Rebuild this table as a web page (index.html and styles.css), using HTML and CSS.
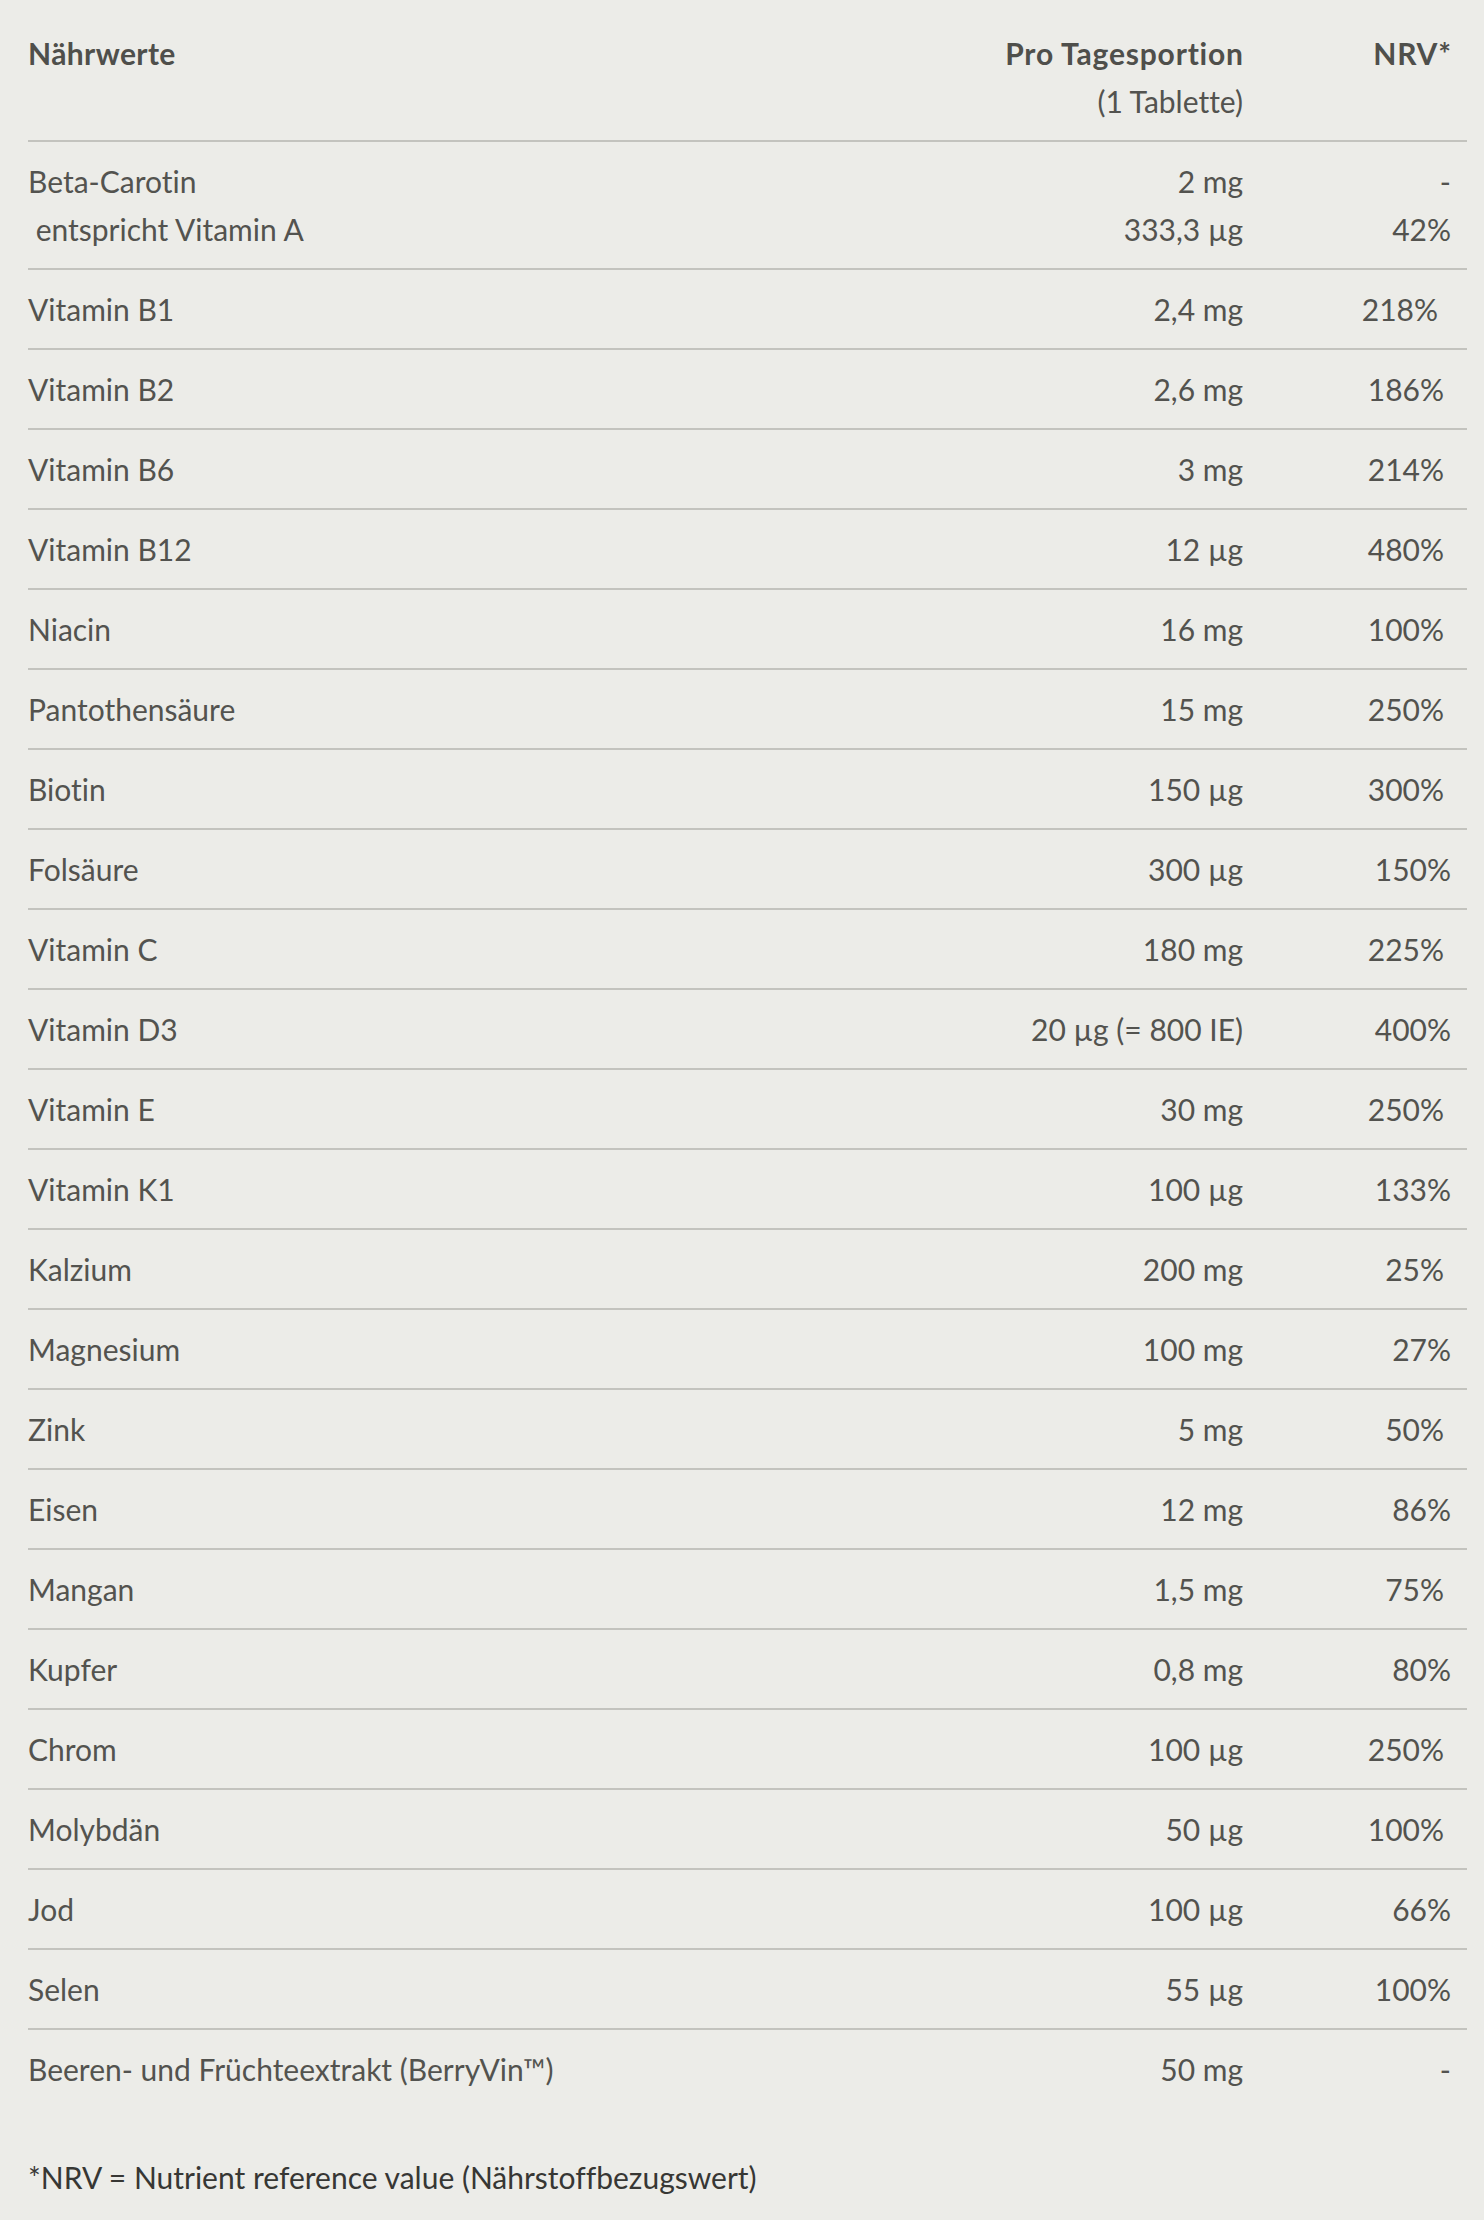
FILE: index.html
```html
<!DOCTYPE html>
<html lang="de">
<head>
<meta charset="utf-8">
<title>Nährwerte</title>
<link rel="stylesheet" href="styles.css">
</head>
<body>
<main class="page">
  <table class="nt">
    <colgroup>
      <col class="c-name">
      <col class="c-amount">
      <col class="c-nrv">
    </colgroup>
    <thead>
      <tr>
        <th class="name">Nährwerte</th>
        <th class="amount"><span class="hd">Pro Tagesportion</span><br><span class="sub">(1 Tablette)</span></th>
        <th class="nrv"><span class="hd">NRV*</span></th>
      </tr>
    </thead>
    <tbody>
      <tr>
        <td class="name">Beta-Carotin<br>&nbsp;entspricht Vitamin A</td>
        <td class="amount">2 mg<br>333,3 µg</td>
        <td class="nrv">-<br>42%</td>
      </tr>
      <tr><td class="name">Vitamin B1</td><td class="amount">2,4 mg</td><td class="nrv s2">218%</td></tr>
      <tr><td class="name">Vitamin B2</td><td class="amount">2,6 mg</td><td class="nrv s1">186%</td></tr>
      <tr><td class="name">Vitamin B6</td><td class="amount">3 mg</td><td class="nrv s1">214%</td></tr>
      <tr><td class="name">Vitamin B12</td><td class="amount">12 µg</td><td class="nrv s1">480%</td></tr>
      <tr><td class="name">Niacin</td><td class="amount">16 mg</td><td class="nrv s1">100%</td></tr>
      <tr><td class="name">Pantothensäure</td><td class="amount">15 mg</td><td class="nrv s1">250%</td></tr>
      <tr><td class="name">Biotin</td><td class="amount">150 µg</td><td class="nrv s1">300%</td></tr>
      <tr><td class="name">Folsäure</td><td class="amount">300 µg</td><td class="nrv">150%</td></tr>
      <tr><td class="name">Vitamin C</td><td class="amount">180 mg</td><td class="nrv s1">225%</td></tr>
      <tr><td class="name">Vitamin D3</td><td class="amount">20 µg (= 800 IE)</td><td class="nrv">400%</td></tr>
      <tr><td class="name">Vitamin E</td><td class="amount">30 mg</td><td class="nrv s1">250%</td></tr>
      <tr><td class="name">Vitamin K1</td><td class="amount">100 µg</td><td class="nrv">133%</td></tr>
      <tr><td class="name">Kalzium</td><td class="amount">200 mg</td><td class="nrv s1">25%</td></tr>
      <tr><td class="name">Magnesium</td><td class="amount">100 mg</td><td class="nrv">27%</td></tr>
      <tr><td class="name">Zink</td><td class="amount">5 mg</td><td class="nrv s1">50%</td></tr>
      <tr><td class="name">Eisen</td><td class="amount">12 mg</td><td class="nrv">86%</td></tr>
      <tr><td class="name">Mangan</td><td class="amount">1,5 mg</td><td class="nrv s1">75%</td></tr>
      <tr><td class="name">Kupfer</td><td class="amount">0,8 mg</td><td class="nrv">80%</td></tr>
      <tr><td class="name">Chrom</td><td class="amount">100 µg</td><td class="nrv s1">250%</td></tr>
      <tr><td class="name">Molybdän</td><td class="amount">50 µg</td><td class="nrv s1">100%</td></tr>
      <tr><td class="name">Jod</td><td class="amount">100 µg</td><td class="nrv">66%</td></tr>
      <tr><td class="name">Selen</td><td class="amount">55 µg</td><td class="nrv">100%</td></tr>
      <tr class="last"><td class="name">Beeren- und Früchteextrakt (BerryVin™)</td><td class="amount">50 mg</td><td class="nrv">-</td></tr>
    </tbody>
  </table>
  <p class="note">*NRV = Nutrient reference value (Nährstoffbezugswert)</p>
</main>
</body>
</html>
```
FILE: styles.css
```css
html, body {
  margin: 0;
  padding: 0;
  background: #ecece8;
}

body {
  font-family: Lato, "Noto Sans", sans-serif;
  font-size: 30px;
  line-height: 48px;
  color: #53534f;
  font-variant-ligatures: none;
  font-feature-settings: "liga" 0, "clig" 0;
}

.page {
  padding: 14px 17px 0 28px;
}

.nt {
  width: 100%;
  border-collapse: collapse;
  table-layout: fixed;
}

.c-amount { width: 500px; }
.c-nrv { width: 208px; }

.nt th,
.nt td {
  padding: 15px 0;
  vertical-align: top;
  border-bottom: 2px solid #c3c3be;
}

.nt th {
  font-weight: 700;
  color: #4f4f4b;
}

.nt th .hd {
  letter-spacing: 0.8px;
  margin-right: -0.8px;
}

.nt th.name {
  letter-spacing: 0.4px;
}

.nt th .sub {
  font-weight: 400;
  color: #53534f;
}

.nt tr.last td {
  border-bottom: none;
}

.name {
  text-align: left;
  padding-left: 0;
}

.amount {
  text-align: right;
  padding-right: 16px !important;
}

.nrv {
  text-align: right;
  padding-right: 16px !important;
}

.nrv.s1 { padding-right: 23px !important; }
.nrv.s2 { padding-right: 29px !important; }

.note {
  margin: 45px 0 0;
  color: #373734;
}
```
